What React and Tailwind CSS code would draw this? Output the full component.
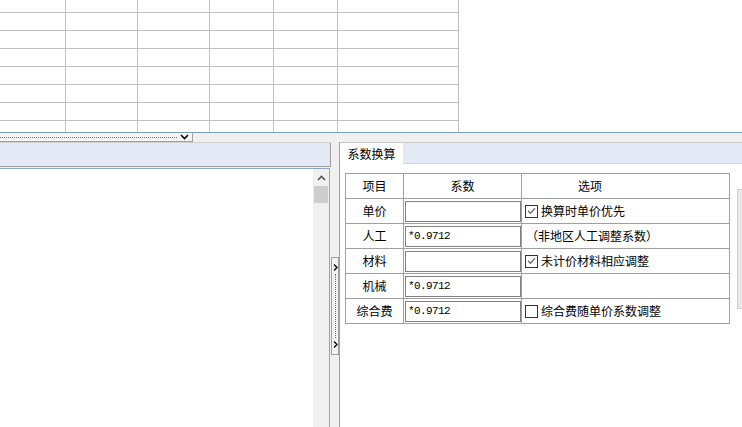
import React from 'react';

// spreadsheet rows: first row is cut off at the top, last one at the bottom
const GRID_ROWS = [
  'h-[13px] border-b',
  'h-[18px] border-b',
  'h-[18px] border-b',
  'h-[18px] border-b',
  'h-[18px] border-b',
  'h-[18px] border-b',
  'h-[18px] border-b',
  'h-[11px]',
];

const FACTOR_ROWS = [
  { label: '单价', value: '', option: { checked: true, text: '换算时单价优先' } },
  { label: '人工', value: '*0.9712', note: '（非地区人工调整系数）' },
  { label: '材料', value: '', option: { checked: true, text: '未计价材料相应调整' } },
  { label: '机械', value: '*0.9712' },
  { label: '综合费', value: '*0.9712', option: { checked: false, text: '综合费随单价系数调整' } },
];

const SheetGrid = () => (
  <div className="w-[459px]">
    {GRID_ROWS.map((rowClass, i) => (
      <div
        key={i}
        className={`grid grid-cols-[66px_72px_72px_64px_64px_121px] border-[#c0c0c0] ${rowClass}`}
      >
        {Array.from({ length: 6 }).map((_, j) => (
          <div key={j} className="border-r border-[#c0c0c0]" />
        ))}
      </div>
    ))}
  </div>
);

const ChevronDown = () => (
  <svg width="9" height="6" viewBox="0 0 9 6">
    <path d="M1 1 L4.5 4.5 L8 1" fill="none" stroke="#000" strokeWidth="1.6" />
  </svg>
);

const ChevronRight = () => (
  <svg width="5" height="7" viewBox="0 0 5 7">
    <path d="M1 0.5 L4 3.5 L1 6.5" fill="none" stroke="#000" strokeWidth="1.3" />
  </svg>
);

const ChevronUp = () => (
  <svg width="9" height="6" viewBox="0 0 9 6">
    <path d="M1 5 L4.5 1.5 L8 5" fill="none" stroke="#555" strokeWidth="1.6" />
  </svg>
);

const Checkbox = ({ checked }) => (
  <span className="w-[13px] h-[13px] border border-[#333] bg-white flex items-center justify-center shrink-0">
    {checked && (
      <svg width="9" height="8" viewBox="0 0 9 8">
        <path d="M1 3.8 L3.4 6.2 L8 1.2" fill="none" stroke="#707070" strokeWidth="1.4" />
      </svg>
    )}
  </span>
);

const FactorInput = ({ value }) => (
  <div className="ml-[1px] w-[116px] h-[21px] border border-[#808080] bg-white flex items-center pl-[2px] font-['Liberation_Mono',monospace] text-[11px] tracking-[-0.6px] text-black">
    {value}
  </div>
);

const FactorTable = () => (
  <div className="grid grid-cols-[58px_118px_208px] border-l border-t border-[#a0a0a0] w-[385px] text-[12px] text-black">
    <div className="h-[25px] border-r border-b border-[#a0a0a0] flex items-center justify-center">项目</div>
    <div className="h-[25px] border-r border-b border-[#a0a0a0] flex items-center justify-center">系数</div>
    <div className="h-[25px] border-r border-b border-[#a0a0a0] flex items-center pl-[56px]">选项</div>
    {FACTOR_ROWS.map((row) => (
      <React.Fragment key={row.label}>
        <div className="h-[25px] border-r border-b border-[#a0a0a0] flex items-center justify-center">
          {row.label}
        </div>
        <div className="h-[25px] border-r border-b border-[#a0a0a0] flex items-center">
          <FactorInput value={row.value} />
        </div>
        <div className="h-[25px] border-r border-b border-[#a0a0a0] flex items-center pl-[3px] gap-[3px]">
          {row.option && (
            <>
              <Checkbox checked={row.option.checked} />
              <span>{row.option.text}</span>
            </>
          )}
          {row.note && <span className="ml-[1px]">{row.note}</span>}
        </div>
      </React.Fragment>
    ))}
  </div>
);

export default function App() {
  return (
    <div className="w-[742px] h-[427px] overflow-hidden bg-[#f0f0f0] flex flex-col font-['Noto_Sans_CJK_SC',sans-serif] leading-none">
      {/* sheet */}
      <div className="h-[133px] shrink-0 bg-white border-b border-[#7a9cbd]">
        <SheetGrid />
      </div>

      {/* collapsed dropdown bar */}
      <div className="h-[9px] shrink-0 flex">
        <div className="w-[193px] h-[9px] bg-[#f5f5f5] border-r border-b border-[#a0a0a0] flex items-center pr-[3px]">
          <div className="flex-1 border-t border-dotted border-[#1e7fd6] mr-[3px] mt-[1px]" />
          <ChevronDown />
        </div>
      </div>

      {/* bottom area */}
      <div className="flex-1 flex min-h-0">
        {/* left panel */}
        <div className="w-[331px] flex flex-col shrink-0">
          <div className="h-[25px] shrink-0 bg-[#e3eaf5] border-t border-[#d0d0d0] border-b border-r border-b-[#a0a0a0] border-r-[#a0a0a0]" />
          <div className="flex-1 mt-[1px] w-[330px] bg-white border-t border-r border-[#8aa6c8] flex">
            <div className="flex-1" />
            <div className="w-[16px] bg-[#f0f0f0] flex flex-col">
              <div className="h-[17px] flex items-center justify-center">
                <ChevronUp />
              </div>
              <div className="mx-[1px] h-[17px] bg-[#cdcdcd]" />
            </div>
          </div>
        </div>

        {/* splitter */}
        <div className="w-[8px] shrink-0 flex flex-col pt-[115px]">
          <div className="w-[8px] h-[98px] border border-[#a0a0a0] bg-[#f3f3f3] flex flex-col items-center py-[6px]">
            <ChevronRight />
            <div className="flex-1 border-l border-dotted border-[#1e7fd6] my-[3px]" />
            <ChevronRight />
          </div>
        </div>

        {/* right panel */}
        <div className="flex-1 bg-white border-l border-[#a0a0a0] flex flex-col">
          <div className="h-[22px] shrink-0 bg-[#e3eaf5] border-t border-[#c8c8c8] border-b border-b-[#d5d5d5] flex">
            <div className="w-[63px] h-[21px] bg-white flex items-center justify-center text-[12px] text-black">
              系数换算
            </div>
          </div>
          <div className="flex pt-[9px] pl-[5px]">
            <FactorTable />
            <div className="ml-[7px] mt-[16px] w-[12px] h-[120px] bg-[#e8e8e8] border border-[#cfcfcf]" />
          </div>
        </div>
      </div>
    </div>
  );
}
